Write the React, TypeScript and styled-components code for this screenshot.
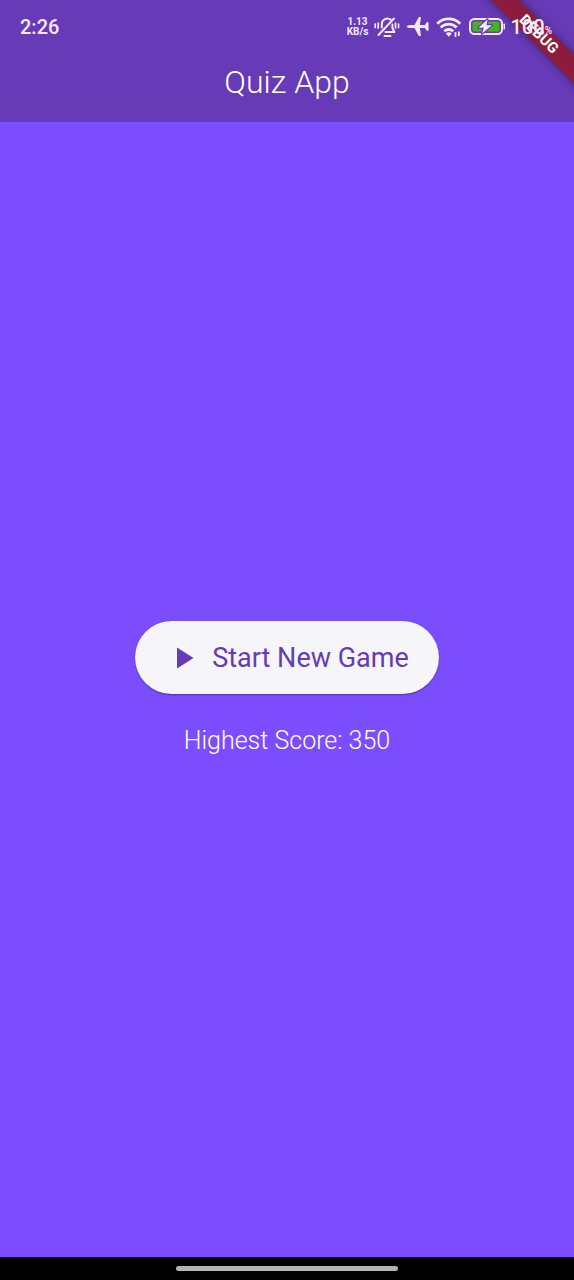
import React from "react";
import styled, { createGlobalStyle } from "styled-components";

const GlobalStyle = createGlobalStyle`
  html, body, #root { height: 100%; }
  body { margin: 0; font-family: Roboto, sans-serif; background: #7c4dff; }
`;

const Screen = styled.div`
  position: relative;
  min-height: 100%;
  display: flex;
  flex-direction: column;
  overflow: hidden;
  background: #7c4dff;
`;

const Header = styled.header`
  background: #673ab7;
  color: #fff;
`;

const StatusBar = styled.div`
  position: relative;
  z-index: 2;
  display: flex;
  align-items: center;
  justify-content: space-between;
  height: 54px;
  padding: 0 22px 0 20px;
  color: #f5e9ff;
`;

const Clock = styled.time`
  font-size: 20px;
  font-weight: 500;
`;

const StatusIcons = styled.div`
  display: flex;
  align-items: center;
`;

const NetSpeed = styled.div`
  display: flex;
  flex-direction: column;
  align-items: center;
  width: 24px;
  margin-right: 4px;
  font-size: 10px;
  line-height: 10px;
  font-weight: 700;
  text-align: center;
`;

const StatusIcon = styled.svg`
  display: block;
  margin-right: 6px;
`;

const Percent = styled.span`
  display: flex;
  align-items: baseline;
  font-size: 20px;
  font-weight: 500;
`;

const PercentSign = styled.small`
  font-size: 10px;
`;

const Title = styled.h1`
  margin: 0;
  height: 68px;
  font-size: 32px;
  line-height: 56px;
  font-weight: 300;
  text-align: center;
`;

const DebugRibbon = styled.div`
  position: absolute;
  z-index: 1;
  top: 24px;
  right: -40px;
  width: 150px;
  height: 20px;
  transform: rotate(45deg);
  background: #8d1c3c;
  box-shadow: 0 0 8px rgba(0, 0, 0, 0.4);
  color: #fff;
  font-size: 15px;
  line-height: 20px;
  font-weight: 700;
  text-align: center;
`;

const Main = styled.main`
  flex: 1;
  display: flex;
  flex-direction: column;
  align-items: center;
  justify-content: center;
  gap: 32px;
  padding-bottom: 2px;
`;

const StartButton = styled.button`
  display: flex;
  align-items: center;
  gap: 11px;
  height: 73px;
  padding: 0 30px;
  border: 0;
  border-radius: 37px;
  background: #f5f5fa;
  box-shadow: 0 1px 2px rgba(0, 0, 0, 0.35);
  color: #673ab7;
  font-family: inherit;
  font-size: 27px;
  font-weight: 400;
`;

const Score = styled.p`
  margin: 0;
  color: #fff;
  font-size: 25px;
  line-height: 30px;
  font-weight: 300;
`;

const NavBar = styled.footer`
  display: flex;
  align-items: center;
  justify-content: center;
  height: 23px;
  background: #000;
`;

const HomeHandle = styled.div`
  width: 222px;
  height: 5px;
  border-radius: 3px;
  background: #b3b3b3;
`;

const MutedBell = () => (
  <StatusIcon width="26" height="24" viewBox="0 0 26 24" fill="none" stroke="currentColor" strokeWidth="2" strokeLinecap="round" strokeLinejoin="round" aria-label="Ringer off" role="img">
    <path d="M7.800 12.500V9a5.500 5.500 0 0 1 9-4.200M18.400 9.500v3.500l2 4H11.500M4.500 20L20 3.500M10.500 21h6" />
    <path d="M1.200 9v3.500M4.200 8v5M21.500 8v5M24.500 9v3.500" strokeWidth="1.700" />
  </StatusIcon>
);

const Plane = () => (
  <StatusIcon width="24" height="24" viewBox="0 0 24 24" fill="currentColor" aria-label="Airplane mode" role="img">
    <path d="M0.500 11.500Q1.500 9.900 4 9.900H8.500L12.500 2.500Q13 1.800 14 2L15 2.300L13.800 9.900H19L20.500 7.500Q21 7 22.500 7.300V15.700Q21 16 20.500 15.500L19 13.100H13.800L15 20.700L14 21Q13 21.200 12.500 20.500L8.500 13.100H4Q1.500 13.100 0.500 11.500z" />
  </StatusIcon>
);

const Wifi = () => (
  <StatusIcon width="27" height="24" viewBox="0 0 27 24" fill="none" stroke="currentColor" strokeWidth="2.800" aria-label="Wi-Fi" role="img">
    <path d="M1.200 8.700a16 16 0 0 1 23 0M4.700 12.500a11 11 0 0 1 16 0M8.300 16.300a6.500 6.500 0 0 1 9 0" />
    <path d="M12.800 21.800l-3-3.200a4.200 4.200 0 0 1 6 0z" fill="currentColor" stroke="none" />
    <path d="M19.500 17v5M22.800 16.500v4.500" strokeWidth="1.800" />
  </StatusIcon>
);

const Battery = () => (
  <StatusIcon width="36" height="18" viewBox="0 0 36 18" aria-label="Battery charging" role="img">
    <rect x="1" y="1" width="32" height="15" rx="4.500" fill="none" stroke="currentColor" strokeWidth="2" />
    <rect x="3.500" y="3.500" width="27" height="10" rx="2" fill="#45b51e" />
    <rect x="34.500" y="5.500" width="1.500" height="6" rx="0.700" fill="currentColor" />
    <path d="M18.500 1.500L9.500 9.800H14.800L13 15.500L23 7.200H17.500z" fill="currentColor" stroke="#673ab7" strokeWidth="2.400" strokeLinejoin="round" paintOrder="stroke" />
  </StatusIcon>
);

export default function App() {
  return (
    <>
      <GlobalStyle />
      <Screen>
        <Header>
          <StatusBar>
            <Clock>2:26</Clock>
            <StatusIcons>
              <NetSpeed>
                <span>1.13</span>
                <span>KB/s</span>
              </NetSpeed>
              <MutedBell />
              <Plane />
              <Wifi />
              <Battery />
              <Percent>
                100<PercentSign>%</PercentSign>
              </Percent>
            </StatusIcons>
          </StatusBar>
          <Title>Quiz App</Title>
        </Header>
        <DebugRibbon>DEBUG</DebugRibbon>
        <Main>
          <StartButton type="button">
            <svg width="36" height="36" viewBox="0 0 24 24" fill="currentColor" aria-hidden="true">
              <path d="M8 5v14l11-7z" />
            </svg>
            Start New Game
          </StartButton>
          <Score>Highest Score: 350</Score>
        </Main>
        <NavBar>
          <HomeHandle />
        </NavBar>
      </Screen>
    </>
  );
}
